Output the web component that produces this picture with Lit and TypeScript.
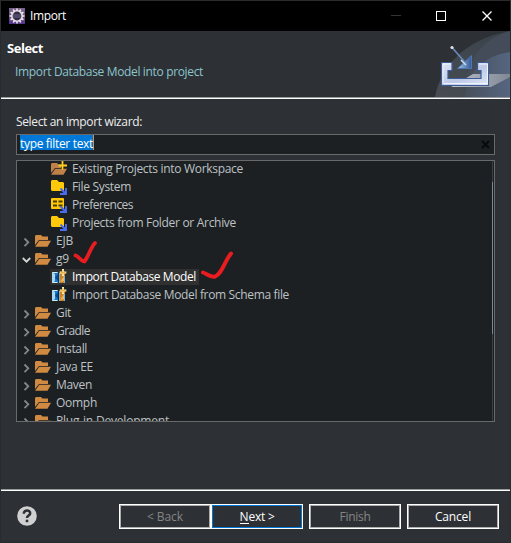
import { LitElement, html, css, svg, nothing } from "lit";
import { customElement } from "lit/decorators.js";
import { classMap } from "lit/directives/class-map.js";

type Icon = "folder" | "project" | "file" | "prefs" | "database";
interface Row {
  label: string;
  icon: Icon;
  width: number;
  child?: boolean;
  open?: boolean;
  selected?: boolean;
}

const rows: Row[] = [
  { label: "Existing Projects into Workspace", icon: "project", width: 171, child: true },
  { label: "File System", icon: "file", width: 59, child: true },
  { label: "Preferences", icon: "prefs", width: 61, child: true },
  { label: "Projects from Folder or Archive", icon: "file", width: 164, child: true },
  { label: "EJB", icon: "folder", width: 17 },
  { label: "g9", icon: "folder", width: 13, open: true },
  { label: "Import Database Model", icon: "database", width: 124, child: true, selected: true },
  { label: "Import Database Model from Schema file", icon: "database", width: 217, child: true },
  { label: "Git", icon: "folder", width: 15 },
  { label: "Gradle", icon: "folder", width: 34 },
  { label: "Install", icon: "folder", width: 31 },
  { label: "Java EE", icon: "folder", width: 37 },
  { label: "Maven", icon: "folder", width: 36 },
  { label: "Oomph", icon: "folder", width: 41 },
  { label: "Plug-in Development", icon: "folder", width: 113 },
];

const folder = (color: string) => svg`
  <path d="M0 12V3l1-1h5l1.500 1.500h5.500v3.500H4L0 12z" fill=${color}/>
  <path d="M0 13.800 4.300 7.700H16l-3.500 6.100z" fill=${color}/>`;
const arrow = svg`<path d="M9.5 9.5l5 5M15 9v6H9" fill="none" stroke="#4a6cf0" stroke-width="1.9"/>`;
const icons = {
  folder: folder("#d08a42"),
  project: svg`${folder("#c0804a")}<path d="M11.5 0v8" stroke="#1c2022" stroke-width="3"/><path d="M11.5 0v8.5M7.5 4.5h8.5" stroke="#ffd020" stroke-width="1.8"/>`,
  file: svg`<path d="M0 2l1-1h5l2 2h4l1 1v8H1l-1-1z" fill="#ffc90a"/>${arrow}`,
  prefs: svg`<rect y="1" width="13" height="11" rx="1" fill="#ffc90a"/><path d="M2 4.5h4M7.500 4.500h4M2 8.5h4M7.5 8.5h4" stroke="#4a3b08" stroke-width="2"/>${arrow}`,
  database: svg`
    <rect x="1" y="3" width="6" height="11" fill="#1d78c8"/>
    <path d="M1 3l3 2v7l-3 2z" fill="#a9d8ee"/><path d="M7 5L4 8.5 7 12z" fill="#0a4b91"/>
    <path d="M1.5 3.5h5M1.5 13.5h5" stroke="#d9edf5"/>
    <rect x="8" y="4" width="6" height="10" fill="#c8832d"/>
    <path d="M8.5 4v10M13.5 7v7" stroke="#76b6e4"/><path d="M9 13l4-6v5z" fill="#edb75d"/>
    <path d="M12 0v7M8.7 3.5h6.6" stroke="#fff0b5" stroke-width="2"/>
    <path d="M12 1v5M9.5 3.5h5" stroke="#e8a725" stroke-width=".8"/>`,
};

@customElement("fit-text")
class FitText extends LitElement {
  static properties = { text: {}, width: { type: Number } };
  declare text: string;
  declare width: number;
  static styles = css`
    :host { display: inline-block; white-space: pre; flex: none; }
    .text { display: inline-block; }
  `;
  render() {
    return html`<span class="text">${this.text}</span>`;
  }
  updated() {
    const el = this.renderRoot.querySelector(".text") as HTMLElement;
    el.style.letterSpacing = "0px";
    const natural = el.getBoundingClientRect().width;
    el.style.letterSpacing = `${(this.width - natural) / this.text.length}px`;
  }
}

@customElement("app-root")
class ImportDialog extends LitElement {
  static styles = css`
    :host { display: block; width: 511px; height: 543px; overflow: hidden; background: #292b2d;
      font: 12px/16px "Open Sans", "Noto Sans", sans-serif; color: #c4c8cb; }
    * { box-sizing: border-box; }
    svg { display: block; flex: none; }
    .window { display: flex; flex-direction: column; height: 543px; padding: 1px; }
    .title { height: 30px; background: #000; color: #fff; display: flex; align-items: center; padding: 0 17px 0 8px; gap: 5px; flex: none; }
    .controls { margin-left: auto; }
    .header { height: 68px; background: #2d3135; border-bottom: 1px solid #fff; box-shadow: inset 0 -1px #96999c; display: flex; justify-content: space-between; flex: none; }
    .words { padding: 9px 0 0 6px; }
    .select { font-size: 13px; font-weight: 700; color: #fff; line-height: 16px; height: 24px; display: flex; }
    .description { padding-left: 8px; color: #8cc4ce; }
    .main { background: #2d3135; height: 391px; padding: 15px 15px 0; flex: none; }
    .label { color: #eee; height: 20px; display: flex; }
    .filter { height: 21px; border: 1px solid #696969; background: #1c2022; display: flex; align-items: center; justify-content: space-between; padding: 0 4px 0 3px; }
    .marked { background: #0078d7; color: #fff; height: 15px; line-height: 17px; border-right: 1px solid #e58b34; display: flex; margin-top: -4px; }
    .tree { position: relative; margin-top: 5px; height: 262px; border: 1px solid #696969; background: #1c2022; display: flex; overflow: hidden; }
    .rows { flex: 1; min-width: 0; margin-top: -1px; }
    .row { height: 18px; display: flex; align-items: center; padding-left: 5px; }
    .row.child { padding-left: 33px; }
    .item { display: flex; align-items: center; height: 16px; gap: 5px; padding: 0 3px 0 1px; color: #bec2c5; }
    .item fit-text { line-height: 18px; }
    .item.selected { background: #303030; color: #fff; }
    .twist { margin: 1px 3px 0 0; }
    .marks { position: absolute; left: 0; top: 0; }
    .scroll { width: 1px; margin-right: 1px; background: #394147; padding-top: 21px; flex: none; }
    .thumb { height: 152px; background: #75899a; }
    .footer { flex: 1; background: #2d3135; border-top: 1px solid #fff; box-shadow: 0 -1px #96999c; padding: 13px 11px 0 16px; display: flex; }
    .help { margin-top: 2px; }
    .buttons { margin-left: auto; display: flex; }
    .button { width: 92px; height: 25px; border: 1px solid #fff; box-shadow: inset 0 0 0 1px #adadad; color: #fff; display: flex; align-items: center; justify-content: center; }
    .button.disabled { color: #858585; }
    .button.default { box-shadow: inset 0 0 0 1px #0078d7; }
    .button.spaced { margin-left: 6px; }
    .key { height: 14px; line-height: 14px; border-bottom: 1px solid #fff; }
    .rest { height: 14px; line-height: 14px; }
  `;

  row(r: Row) {
    return html`<div class=${classMap({ row: true, child: !!r.child })}>
      ${r.child ? nothing : html`<svg class="twist" width="9" height="10" viewBox="0 0 9 10">
        <path d=${r.open ? "M.8 3 4.5 6.7 8.2 3" : "M2.5 1.5l3.8 3.8L2.5 9.1"} fill="none" stroke=${r.open ? "#d4d4d4" : "#82878a"} stroke-width="1.8"/></svg>`}
      <span class=${classMap({ item: true, selected: !!r.selected })}>
        <svg width="16" height="16" viewBox="0 0 16 16">${icons[r.icon]}</svg>
        <fit-text .text=${r.label} .width=${r.width}></fit-text>
      </span>
    </div>`;
  }

  render() {
    const teeth = Array.from({ length: 12 }, (_, i) => i * 30);
    return html`<div class="window">
      <div class="title">
        <svg width="16" height="16" viewBox="0 0 16 16">
          <defs><linearGradient id="eclipse" x2="0" y2="1"><stop stop-color="#79658d"/><stop offset="1" stop-color="#54358a"/></linearGradient></defs>
          <rect width="16" height="16" fill="url(#eclipse)"/>
          ${teeth.map((a) => svg`<path d="M7.2 .5h1.6v2.5H7.2z" fill="#eee9e5" transform="rotate(${a} 8 8)"/>`)}
          <circle cx="8" cy="8" r="5.2" fill="#302a4c" stroke="#e6e1df" stroke-width="1.6"/>
          <path d="M4 7h8M4 9h8" stroke="#6c6686"/>
        </svg>
        <fit-text .text=${"Import"} .width=${36}></fit-text>
        <svg class="controls" width="102" height="12" viewBox="0 0 102 12">
          <path d="M0 5.5h10" stroke="#333"/><rect x="45.5" y="1.5" width="9" height="9" fill="none" stroke="#fff"/>
          <path d="M91.5 1.5l9 9M100.5 1.5l-9 9" stroke="#fff" stroke-width="1.3"/>
        </svg>
      </div>
      <div class="header">
        <div class="words">
          <div class="select"><fit-text .text=${"Select"} .width=${36}></fit-text></div>
          <div class="description"><fit-text .text=${"Import Database Model into project"} .width=${188}></fit-text></div>
        </div>
        <svg width="75" height="66" viewBox="0 0 75 66">
          <defs>
            <linearGradient id="sweep" x1="0" y1="1" x2="1" y2="0"><stop stop-color="#484d53"/><stop offset="1" stop-color="#39414a"/></linearGradient>
            <linearGradient id="orb"><stop stop-color="#474f5a"/><stop offset="1" stop-color="#566681"/></linearGradient>
            <linearGradient id="shadow"><stop stop-color="#d1d6e2"/><stop offset="1" stop-color="#888e98"/></linearGradient>
            <linearGradient id="tray" x2="1" y2="1"><stop stop-color="#dce3f3"/><stop offset=".55" stop-color="#bdc9e7"/><stop offset="1" stop-color="#dee7f7"/></linearGradient>
            <linearGradient id="head"><stop stop-color="#a7c6e4"/><stop offset="1" stop-color="#32599b"/></linearGradient>
          </defs>
          <path d="M0 66C5 39 26 9 75 0v66z" fill="url(#sweep)"/>
          <path d="M30 66C30 30 46 8 75 0v66z" fill="#434c58"/>
          <path d="M30 66C31 42 48 25 75 21v45z" fill="url(#orb)"/>
          <path d="M38 43h37v3L56 56H16z" fill="url(#shadow)" opacity=".85"/>
          <path d="M6.5 31.5h10.5v8h-4v8h33v-8h-3.5v-8h11v23h-47z" fill="url(#tray)" stroke="#3c5b96" stroke-width="1.2"/>
          <path d="M8 53V33h7.5M44 33h8.5v20" fill="none" stroke="#eff4fc"/>
          <path d="M9 52.5h43" stroke="#eff4fc"/>
          <path d="M17.5 17l14 16" stroke="#6b8abb" stroke-width="1.7"/>
          <path d="M36.5 24.5v13h-14z" fill="url(#head)" stroke="#4e76b0"/>
          <path d="M26 29l5 5" stroke="#c7e1f1" stroke-width="1.5"/>
          <circle cx="17" cy="16.5" r="1.6" fill="#dce2ee"/>
        </svg>
      </div>
      <div class="main">
        <div class="label"><fit-text .text=${"Select an import wizard:"} .width=${126}></fit-text></div>
        <div class="filter">
          <span class="marked"><fit-text .text=${"type filter text"} .width=${73}></fit-text></span>
          <svg width="9" height="9" viewBox="0 0 9 9"><path d="M1 1l7 7M8 1L1 8" stroke="#0a0a0a" stroke-width="2"/></svg>
        </div>
        <div class="tree">
          <div class="rows">${rows.map((r) => this.row(r))}</div>
          <div class="scroll"><div class="thumb"></div></div>
          <svg class="marks" width="230" height="130" viewBox="0 0 230 130">
            <g fill="none" stroke="#e91d20" stroke-linecap="round" stroke-linejoin="round">
              <path d="M58.5 94.500C62 95.500 64 100.500 67.500 100.500C71 96 74 86 78 82" stroke-width="3.8"/>
              <path d="M186 111.500C190 113 193 116.500 198 115.500C205 113 207 101 214 92.500" stroke-width="4"/>
            </g>
          </svg>
        </div>
      </div>
      <div class="footer">
        <svg class="help" width="20" height="20" viewBox="0 0 20 20"><circle cx="10" cy="10" r="9.8" fill="#d0d0d0"/>
          <path d="M6.8 7.7C6.8 3.2 13.4 3.6 13.2 7.4C13.1 9.7 10 9.5 10 12" fill="none" stroke="#2d3135" stroke-width="2.5"/><rect x="8.7" y="13.7" width="2.6" height="2.5" fill="#2d3135"/></svg>
        <div class="buttons">
          <div class="button disabled"><fit-text .text=${"< Back"} .width=${36}></fit-text></div>
          <div class="button default"><fit-text class="key" .text=${"N"} .width=${9}></fit-text><fit-text class="rest" .text=${"ext >"} .width=${26}></fit-text></div>
          <div class="button disabled spaced"><fit-text .text=${"Finish"} .width=${31}></fit-text></div>
          <div class="button spaced"><fit-text .text=${"Cancel"} .width=${36}></fit-text></div>
        </div>
      </div>
    </div>`;
  }
}
